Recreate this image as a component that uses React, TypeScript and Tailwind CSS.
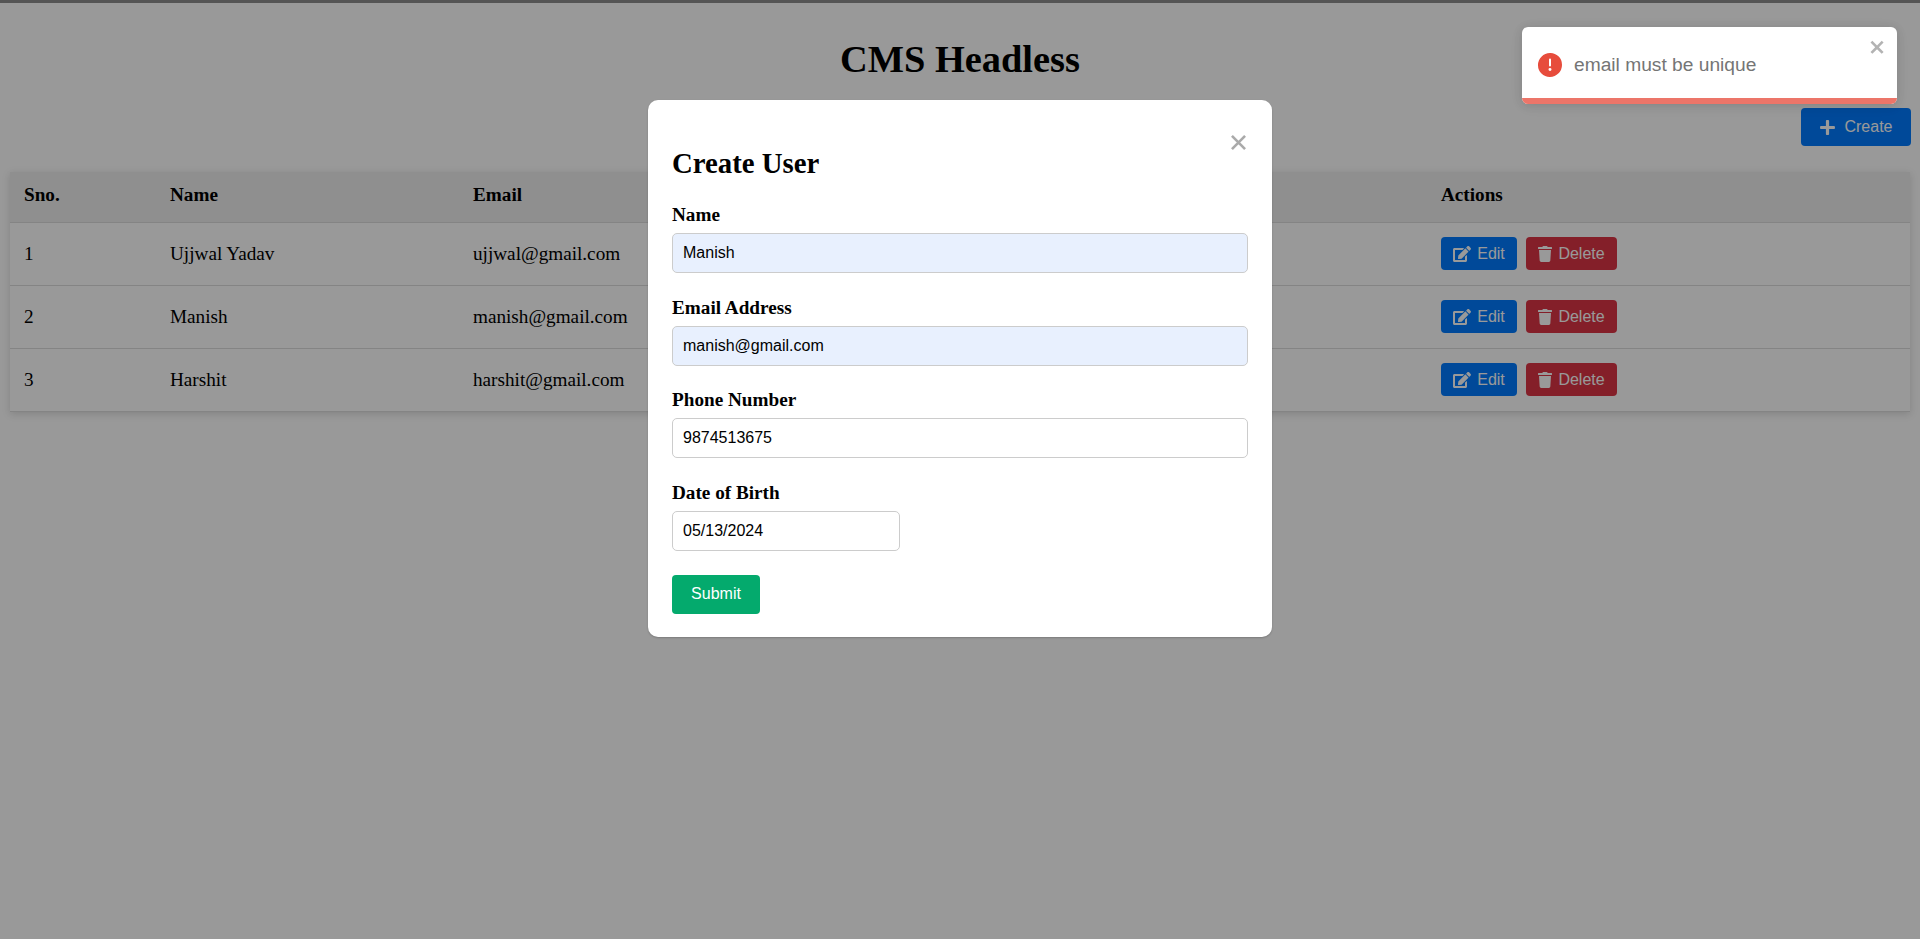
import { FaEdit, FaPlus, FaTrash } from "react-icons/fa";

const users = [
    { id: 1, name: "Ujjwal Yadav", email: "ujjwal@gmail.com" },
    { id: 2, name: "Manish", email: "manish@gmail.com" },
    { id: 3, name: "Harshit", email: "harshit@gmail.com" },
];

const Field = ({
    label,
    value,
    autofilled,
    narrow,
}: {
    label: string;
    value: string;
    autofilled?: boolean;
    narrow?: boolean;
}) => (
    <div className="flex flex-col mb-[23.5px]">
        <label className="font-bold text-[19.2px] leading-[22px] mb-[7px] text-black">
            {label}
        </label>
        <input
            readOnly
            value={value}
            className={`h-[40px] px-[10px] border border-[#ccc] rounded-[5px] text-[16px] text-black font-['Liberation_Sans',sans-serif] outline-none ${
                autofilled ? "bg-[#e8f0fe]" : "bg-white"
            } ${narrow ? "w-[228px]" : "w-full"}`}
        />
    </div>
);

export default function App() {
    return (
        <div className="relative min-h-[939px] bg-white font-['Liberation_Serif',serif] text-black">
            <div className="flex flex-col px-[10px] pt-[2px]">
                <h1 className="text-center font-bold text-[38.4px] leading-[46px] mt-[34px]">
                    CMS Headless
                </h1>
                <div className="flex justify-end mt-[26px] -mr-px">
                    <button className="flex items-center gap-[8px] h-[38px] w-[110px] justify-center rounded-[4px] bg-[#007bff] text-white text-[16px] font-['Liberation_Sans',sans-serif]">
                        <FaPlus className="w-[17px] h-[17px]" />
                        Create
                    </button>
                </div>
                <div className="mt-[26px] shadow-[0_2px_8px_rgba(0,0,0,0.15)]">
                    <table className="w-full table-fixed text-[19.2px] leading-[24px] border-collapse">
                        <colgroup>
                            <col className="w-[146px]" />
                            <col className="w-[303px]" />
                            <col className="w-[968px]" />
                            <col />
                        </colgroup>
                        <thead className="bg-[#eeeeee]">
                            <tr className="h-[50px] border-b border-[#ddd] text-left">
                                <th className="px-[14px] pb-[4px] font-bold">Sno.</th>
                                <th className="px-[14px] pb-[4px] font-bold">Name</th>
                                <th className="px-[14px] pb-[4px] font-bold">Email</th>
                                <th className="px-[14px] pb-[4px] font-bold">Actions</th>
                            </tr>
                        </thead>
                        <tbody>
                            {users.map((user) => (
                                <tr key={user.id} className="h-[63px] border-b border-[#ddd]">
                                    <td className="px-[14px]">{user.id}</td>
                                    <td className="px-[14px]">{user.name}</td>
                                    <td className="px-[14px]">{user.email}</td>
                                    <td className="px-[14px]">
                                        <div className="flex gap-[9px] text-[16px] text-white font-['Liberation_Sans',sans-serif]">
                                            <button className="flex items-center gap-[6px] h-[33.6px] w-[76px] justify-center rounded-[4px] bg-[#007bff]">
                                                <FaEdit className="w-[18px] h-[18px]" />
                                                Edit
                                            </button>
                                            <button className="flex items-center gap-[6px] h-[33.6px] w-[91px] justify-center rounded-[4px] bg-[#dc3545]">
                                                <FaTrash className="w-[14px] h-[16px]" />
                                                Delete
                                            </button>
                                        </div>
                                    </td>
                                </tr>
                            ))}
                        </tbody>
                    </table>
                </div>
            </div>

            <div className="absolute inset-0 bg-black/40 border-t-[3px] border-[#555] flex justify-center items-start pt-[97px]">
                <div className="w-[624px] h-[537px] bg-white rounded-[10px] px-[24px] shadow-[0_1px_2px_rgba(0,0,0,0.2)] relative">
                    <button className="absolute right-[26px] top-[35px] text-[#aaa]">
                        <svg viewBox="0 0 16 16" className="w-[15px] h-[15px] block" fill="none" stroke="currentColor" strokeWidth="2.8">
                            <path d="M1 1 15 15M15 1 1 15" />
                        </svg>
                    </button>
                    <h2 className="font-bold text-[28.8px] leading-[34px] mt-[46px] mb-[24px]">
                        Create User
                    </h2>
                    <Field label="Name" value="Manish" autofilled />
                    <Field label="Email Address" value="manish@gmail.com" autofilled />
                    <Field label="Phone Number" value="9874513675" />
                    <Field label="Date of Birth" value="05/13/2024" narrow />
                    <button className="w-[88px] h-[39px] mt-[0.5px] rounded-[4px] bg-[#04aa6d] text-white text-[16px] font-['Liberation_Sans',sans-serif]">
                        Submit
                    </button>
                </div>
            </div>

            {/* Toast */}
            <div className="absolute left-[1522px] top-[27px] w-[375px] h-[77px] bg-white rounded-[6px] overflow-hidden shadow-[0_1px_10px_rgba(0,0,0,0.1),0_2px_15px_rgba(0,0,0,0.05)] font-['Liberation_Sans',sans-serif]">
                <div className="flex items-center h-[76px] pl-[16px]">
                    <svg viewBox="0 0 24 24" className="w-[24px] h-[24px] mr-[12px] shrink-0" fill="#e74c3c">
                        <path d="M11.983 0a12.206 12.206 0 00-8.51 3.653A11.8 11.8 0 000 12.207 11.779 11.779 0 0011.8 24h.214A12.111 12.111 0 0024 11.791 11.766 11.766 0 0011.983 0zM10.5 16.542a1.476 1.476 0 011.449-1.53h.027a1.527 1.527 0 011.523 1.47 1.475 1.475 0 01-1.449 1.53h-.027a1.529 1.529 0 01-1.523-1.47zM11 12.5v-6a1 1 0 012 0v6a1 1 0 11-2 0z" />
                    </svg>
                    <span className="text-[19.2px] text-[#757575]">email must be unique</span>
                </div>
                <button className="absolute right-[10px] top-[10px] text-[#b3b3b3]">
                    <svg viewBox="0 0 14 16" className="w-[18px] h-[20px] block" fill="currentColor">
                        <path d="M7.71 8.23l3.75 3.75-1.48 1.48-3.75-3.75-3.75 3.75L1 11.98l3.75-3.75L1 4.48 2.48 3l3.75 3.75L9.98 3l1.48 1.48-3.75 3.75z" />
                    </svg>
                </button>
                <div className="absolute bottom-0 left-0 right-0 h-[6px] bg-[#ec7569]" />
            </div>
        </div>
    );
}
